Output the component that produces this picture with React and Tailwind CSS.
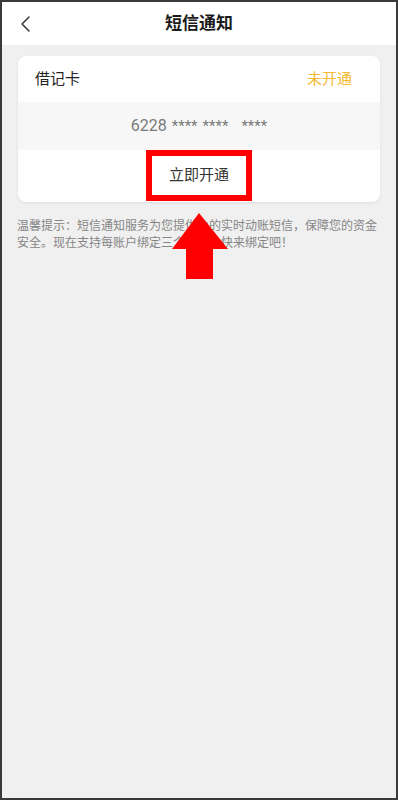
import React from "react";

export default function App() {
  const font = { fontFamily: 'Roboto, "Noto Sans CJK SC", sans-serif' };
  return (
    <div
      className="relative w-[398px] h-[800px] border-2 border-[#3a3a3a] bg-[#f0f0f0] flex flex-col overflow-hidden"
      style={font}
    >
      <div className="h-[43px] bg-white grid grid-cols-[1fr_auto_1fr] items-center">
        <div className="pl-[17px] flex items-center">
          <svg width="14" height="18" viewBox="0 0 14 18" fill="none">
            <path d="M10 2 L3 9 L10 16" stroke="#333" strokeWidth="1.5" strokeLinecap="round" strokeLinejoin="round" />
          </svg>
        </div>
        <div className="text-[17px] font-bold text-[#1a1a1a] leading-none">短信通知</div>
        <div />
      </div>

      <div className="mx-[16px] mt-[11px] bg-white rounded-[8px] shadow-[0_1px_3px_rgba(0,0,0,0.08)] overflow-hidden">
        <div className="h-[46px] flex items-center justify-between pl-[17px] pr-[28px]">
          <span className="text-[15px] text-[#222]">借记卡</span>
          <span className="text-[15px] text-[#f6b82f]">未开通</span>
        </div>
        <div className="h-[48px] bg-[#f7f7f7] flex items-center justify-center text-[#7a7a7a]">
          <span className="text-[16px]">6228</span>
          <span className="text-[15px] ml-[5px]">****</span>
          <span className="text-[15px] ml-[5px]">****</span>
          <span className="text-[15px] ml-[13px]">****</span>
        </div>
        <div className="h-[52px] flex justify-center">
          <div className="w-[106px] h-[51px] border-[6px] border-[#ff0000] flex items-center justify-center">
            <span className="text-[15px] text-[#333]">立即开通</span>
          </div>
        </div>
      </div>

      <p className="mt-[16px] px-[15px] text-[12px] leading-[17px] text-[#858585]">
        温馨提示：短信通知服务为您提供免的实时动账短信，保障您的资金安全。现在支持每账户绑定三个账户，快来绑定吧！
      </p>

      <svg
        className="absolute left-[170px] top-[211px]"
        width="56"
        height="66"
        viewBox="0 0 56 66"
      >
        <polygon points="27,0 0,36 14,36 14,66 41,66 41,36 56,36" fill="#ff0000" />
      </svg>
    </div>
  );
}
